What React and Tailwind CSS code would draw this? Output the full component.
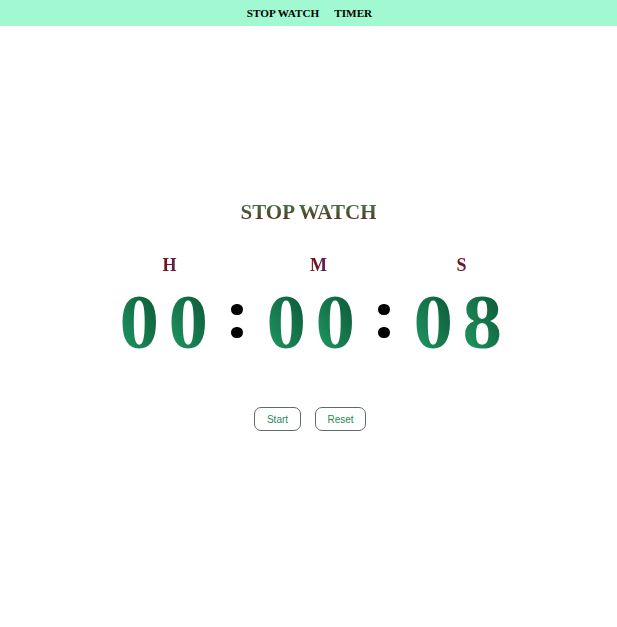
import React, { useState } from "react";

const serif = "font-['Liberation_Serif','Times_New_Roman',serif]";

const Digits = ({ value }) => (
    <div className={`flex h-[86px] ${serif} font-bold text-[79px] leading-[86px]`}>
        {value.split("").map((d, i) => (
            <span
                key={i}
                className="inline-block w-[49px] pl-[1px] bg-linear-to-tr from-[#22a36b] to-[#08472b] bg-clip-text text-transparent"
            >
                {d}
            </span>
        ))}
    </div>
);

const Group = ({ label, value, labelShift }) => (
    <div className="flex flex-col items-center w-[98px]">
        <div
            className={`h-[18px] ${serif} font-bold text-[18px] leading-[18px] bg-linear-to-r from-[#7a1010] via-[#6e1428] to-[#4a1f68] bg-clip-text text-transparent ${labelShift}`}
        >
            {label}
        </div>
        <div className="mt-[5px]">
            <Digits value={value} />
        </div>
    </div>
);

const Colon = () => (
    <div className="flex flex-col gap-[12px] mt-[48px] ml-[14px] mr-[23px]">
        <div className="w-[12px] h-[11px] rounded-full bg-black" />
        <div className="w-[12px] h-[11px] rounded-full bg-black" />
    </div>
);

export default function App() {
    const [seconds] = useState(8);
    const pad = (n) => String(n).padStart(2, "0");
    const h = pad(Math.floor(seconds / 3600));
    const m = pad(Math.floor((seconds % 3600) / 60));
    const s = pad(seconds % 60);

    return (
        <div className="min-h-[627px] bg-white">
            <nav className={`h-[26px] bg-[#a1f9d1] flex justify-center items-center gap-[15px] pl-[2px] ${serif} font-bold text-[11.2px] text-black`}>
                <span>STOP WATCH</span>
                <span>TIMER</span>
            </nav>

            <div className="flex flex-col items-center">
                <h1
                    className={`mt-[176px] h-[20px] ${serif} font-bold text-[21px] leading-[20px] bg-linear-to-b from-[#27804f] to-[#52291c] bg-clip-text text-transparent`}
                >
                    STOP WATCH
                </h1>

                <div className="flex items-start mt-[34px] pl-[12px]">
                    <Group label="H" value={h} labelShift="translate-x-[2px]" />
                    <Colon />
                    <Group label="M" value={m} labelShift="translate-x-[4px]" />
                    <Colon />
                    <Group label="S" value={s} labelShift="" />
                </div>

                <div className="flex gap-[14px] mt-[42px] pl-[3px] font-['Liberation_Sans',Arial,sans-serif] text-[10px] text-[#1f8a55]">
                    <button className="w-[47px] h-[24px] border border-[#5f6b66] rounded-[7px] bg-white">
                        Start
                    </button>
                    <button className="w-[51px] h-[24px] border border-[#5f6b66] rounded-[7px] bg-white">
                        Reset
                    </button>
                </div>
            </div>
        </div>
    );
}
